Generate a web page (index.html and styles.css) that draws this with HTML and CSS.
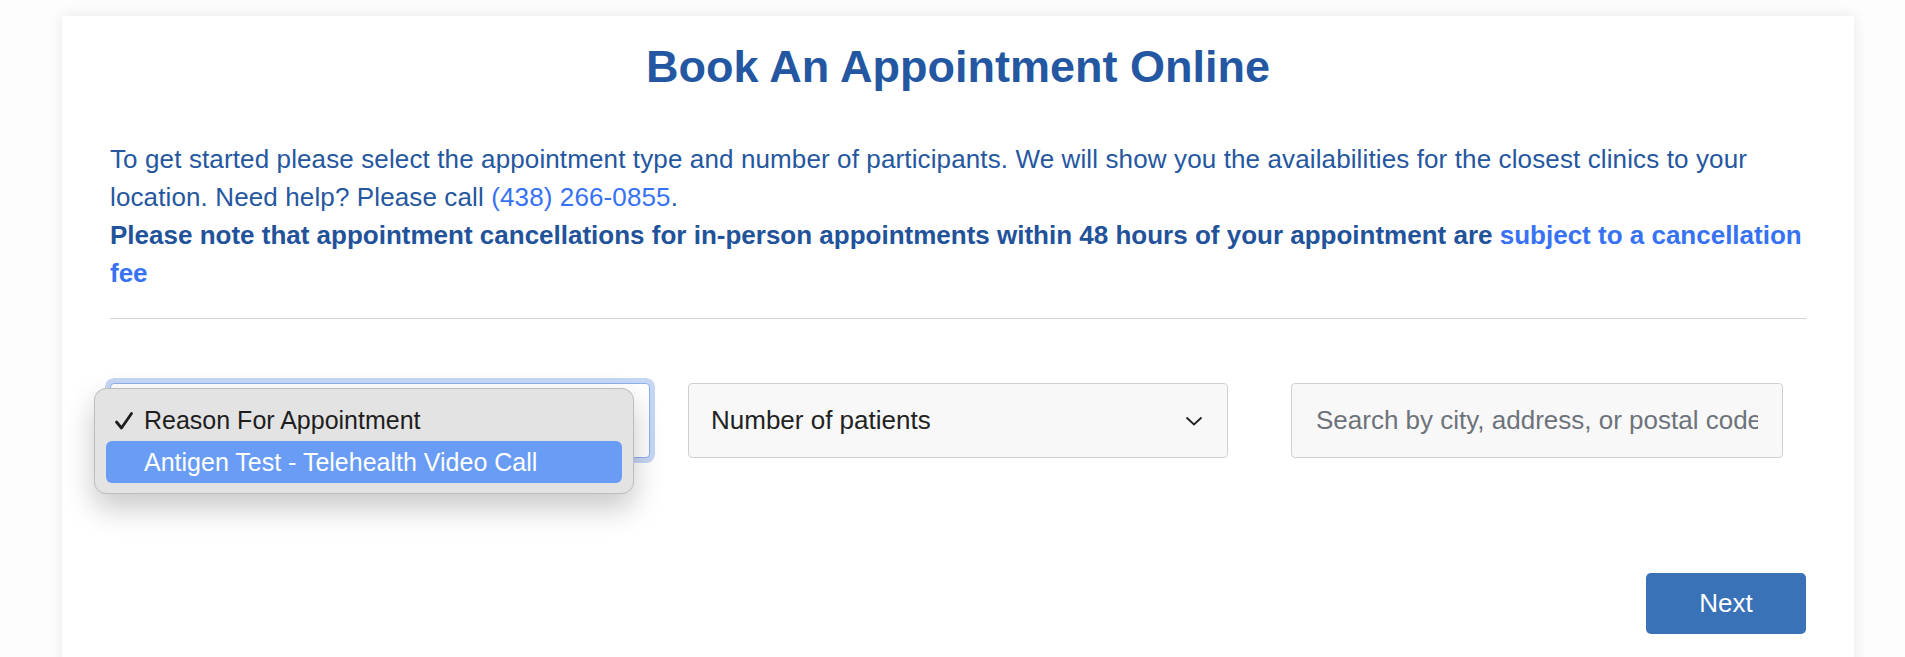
FILE: index.html
```html
<!DOCTYPE html>
<html lang="en">
<head>
    <meta charset="UTF-8">
    <meta name="viewport" content="width=device-width, initial-scale=1.0">
    <title>Book An Appointment Online</title>
    <link rel="stylesheet" href="styles.css">
</head>
<body>
    <div class="card">
        <h1 class="title">Book An Appointment Online</h1>
        <p class="intro">
            To get started please select the appointment type and number of participants. We will show you the availabilities for the closest clinics to your location. Need help? Please call <a href="#">(438) 266-0855</a>.<br>
            <strong>Please note that appointment cancellations for in-person appointments within 48 hours of your appointment are <a href="#">subject to a cancellation fee</a></strong>
        </p>
        <hr class="divider">

        <div class="fields">
            <div class="field">
                <div class="select focused"></div>
                <div class="menu">
                    <div class="menu-item">
                        <svg class="check" width="20" height="20" viewBox="0 0 20 20"><path d="M2.5 11 L7.5 17 L17.5 2.5" fill="none" stroke="#1e1e1e" stroke-width="2.8" stroke-linecap="round" stroke-linejoin="round"/></svg>
                        Reason For Appointment
                    </div>
                    <div class="menu-item active">Antigen Test - Telehealth Video Call</div>
                </div>
            </div>
            <div class="field">
                <div class="select">
                    <span>Number of patients</span>
                    <svg class="chevron" width="18" height="10" viewBox="0 0 18 10"><path d="M1.5 1.5 L9 8.5 L16.5 1.5" fill="none" stroke="#222" stroke-width="1.8"/></svg>
                </div>
            </div>
            <div class="field search">
                <input class="search-input" type="text" placeholder="Search by city, address, or postal code">
            </div>
        </div>

        <div class="actions">
            <button class="next">Next</button>
        </div>
    </div>
</body>
</html>
```

FILE: styles.css
```css
body {
    margin: 0;
    padding: 0;
    background: #fdfdfd;
    font-family: "Liberation Sans", Arial, Helvetica, sans-serif;
    overflow: hidden;
}
.card {
    margin: 16px 51px 0 62px;
    padding: 24px 48px 60px 48px;
    background: white;
    box-shadow: 0 0 14px rgba(0, 0, 0, 0.09);
}
.title {
    margin: 0 0 46px 0;
    font-size: 45px;
    line-height: 54px;
    font-weight: bold;
    color: #2457a2;
    text-align: center;
}
.intro {
    margin: 0;
    font-size: 26px;
    line-height: 38px;
    letter-spacing: 0.12px;
    color: #25579f;
}
.intro strong {
    color: #22529a;
    letter-spacing: 0;
}
.intro a {
    color: #3672f3;
    text-decoration: none;
}
.divider {
    margin: 26px 0 0 0;
    border: none;
    border-top: 1px solid #d2d2d2;
}
.fields {
    display: grid;
    grid-template-columns: 1fr 1fr 1fr;
    gap: 38px;
    margin-top: 64px;
}
.field {
    position: relative;
}
.select {
    height: 75px;
    box-sizing: border-box;
    padding: 0 22px;
    display: flex;
    align-items: center;
    justify-content: space-between;
    background: #f8f8f8;
    border: 1px solid #cfcfcf;
    border-radius: 4px;
    font-size: 26px;
    color: #222;
}
.select.focused {
    background: white;
    border-color: #8fb0ee;
    box-shadow: 0 0 0 5px #c6d7f6;
}
.chevron {
    margin-right: 2px;
}
.search {
    padding: 0 23px 0 25px;
}
.search-input {
    width: 100%;
    height: 75px;
    box-sizing: border-box;
    padding: 0 24px;
    background: #f8f8f8;
    border: 1px solid #cfcfcf;
    border-radius: 4px;
    font-family: "Liberation Sans", Arial, sans-serif;
    font-size: 26px;
    outline: none;
}
.search-input::placeholder {
    color: #6d737a;
}
.menu {
    position: absolute;
    left: -16px;
    top: 5px;
    width: 540px;
    box-sizing: border-box;
    padding: 10px 11px;
    background: #e3e3e3;
    border: 1px solid #bdbdbd;
    border-radius: 12px;
    box-shadow: 0 14px 30px rgba(0, 0, 0, 0.22);
    font-family: "Liberation Sans", Arial, sans-serif;
    font-size: 25px;
    color: #1e1e1e;
    z-index: 2;
}
.menu-item {
    height: 42px;
    line-height: 42px;
    padding-left: 38px;
    border-radius: 6px;
    position: relative;
}
.menu-item.active {
    background: #699cf5;
    color: white;
}
.check {
    position: absolute;
    left: 8px;
    top: 12px;
}
.actions {
    display: flex;
    justify-content: flex-end;
    margin-top: 115px;
}
.next {
    width: 160px;
    height: 61px;
    background: #3a72b8;
    color: white;
    border: none;
    border-radius: 5px;
    font-family: "Liberation Sans", Arial, sans-serif;
    font-size: 26px;
    cursor: pointer;
}
```
